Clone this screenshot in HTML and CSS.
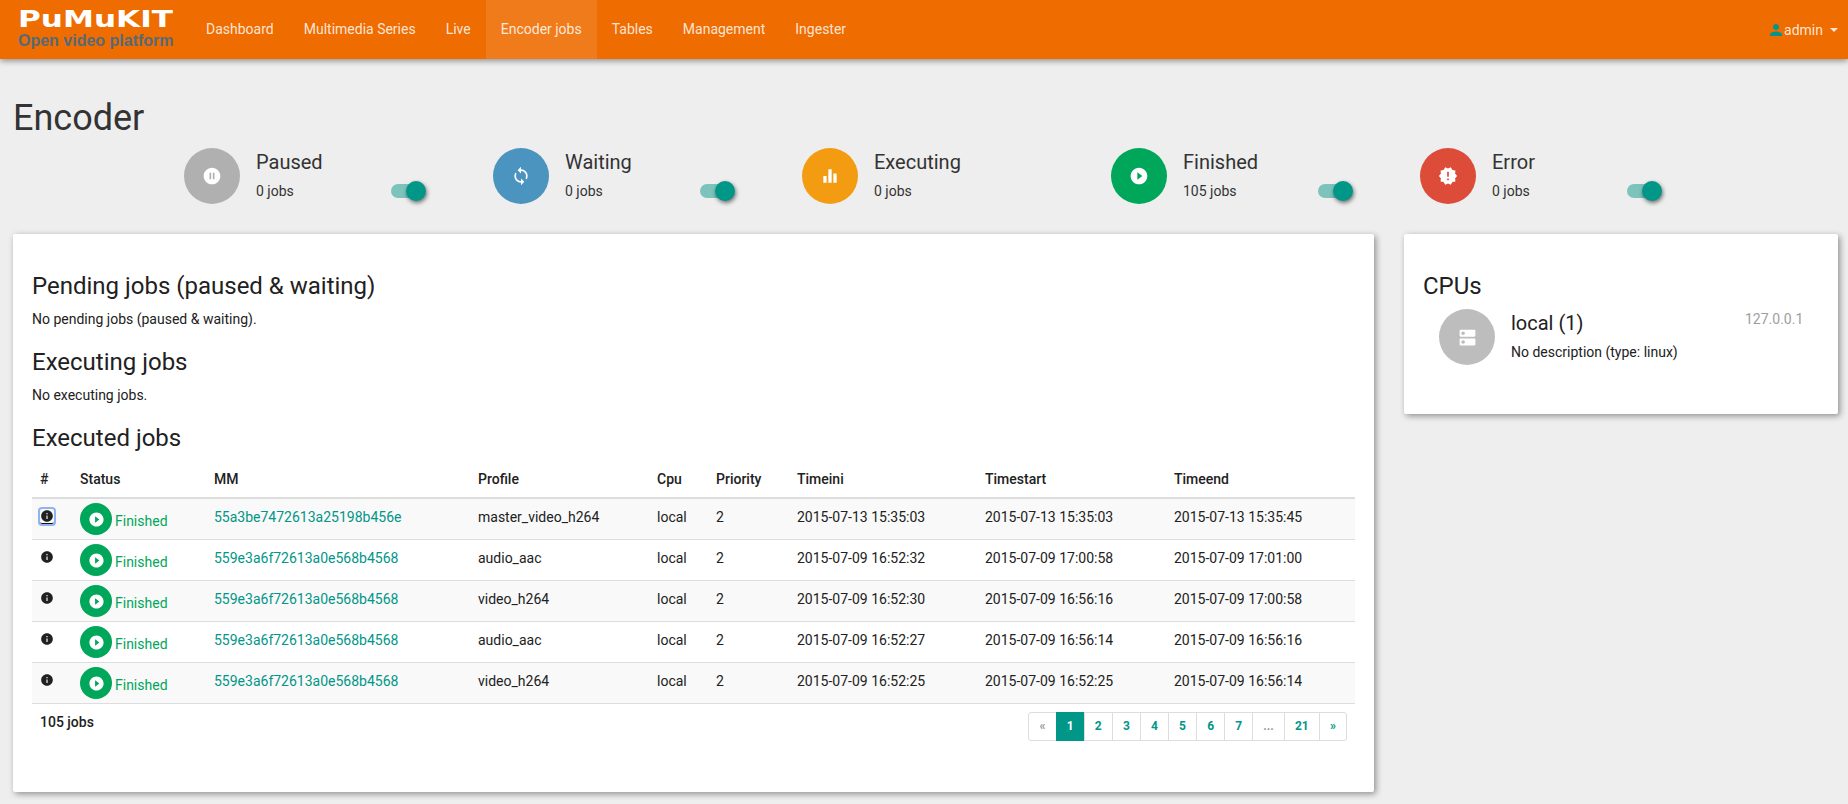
FILE: index.html
```html
<!DOCTYPE html>
<html lang="en">
<head>
    <meta charset="UTF-8">
    <title>PuMuKIT - Encoder jobs</title>
    <link rel="stylesheet" href="styles.css">
</head>
<body>
    <!-- Icon set -->
    <svg class="sprite" xmlns="http://www.w3.org/2000/svg">
        <symbol id="i-pause" viewBox="0 0 24 24"><path d="M12 2C6.48 2 2 6.48 2 12s4.48 10 10 10 10-4.48 10-10S17.52 2 12 2zm-1 14H9V8h2v8zm4 0h-2V8h2v8z"/></symbol>
        <symbol id="i-sync" viewBox="0 0 24 24"><path d="M12 4V1L8 5l4 4V6c3.31 0 6 2.69 6 6 0 1.01-.25 1.97-.7 2.8l1.46 1.46C19.54 15.03 20 13.57 20 12c0-4.42-3.58-8-8-8zm0 14c-3.31 0-6-2.69-6-6 0-1.01.25-1.97.7-2.8L5.24 7.74C4.46 8.97 4 10.43 4 12c0 4.42 3.58 8 8 8v3l4-4-4-4v3z"/></symbol>
        <symbol id="i-bars" viewBox="0 0 24 24"><path d="M10 20h4V4h-4v16zm-6 0h4v-8H4v8zM16 9v11h4V9h-4z"/></symbol>
        <symbol id="i-play" viewBox="0 0 24 24"><path d="M12 2C6.48 2 2 6.48 2 12s4.48 10 10 10 10-4.48 10-10S17.52 2 12 2zm-2 14.5v-9l6 4.5-6 4.5z"/></symbol>
        <symbol id="i-error" viewBox="0 0 24 24"><path d="M23 12l-2.44-2.78.34-3.68-3.61-.82-1.89-3.18L12 3 8.6 1.54 6.71 4.72l-3.61.81.34 3.68L1 12l2.44 2.78-.34 3.69 3.61.82 1.89 3.18L12 21l3.4 1.46 1.89-3.18 3.61-.82-.34-3.68L23 12zm-10 5h-2v-2h2v2zm0-4h-2V7h2v6z"/></symbol>
        <symbol id="i-dns" viewBox="0 0 24 24"><path d="M20 13H4c-.55 0-1 .45-1 1v6c0 .55.45 1 1 1h16c.55 0 1-.45 1-1v-6c0-.55-.45-1-1-1zM7 19c-1.1 0-2-.9-2-2s.9-2 2-2 2 .9 2 2-.9 2-2 2zM20 3H4c-.55 0-1 .45-1 1v6c0 .55.45 1 1 1h16c.55 0 1-.45 1-1V4c0-.55-.45-1-1-1zM7 9c-1.1 0-2-.9-2-2s.9-2 2-2 2 .9 2 2-.9 2-2 2z"/></symbol>
        <symbol id="i-info" viewBox="0 0 24 24"><path d="M12 2C6.48 2 2 6.48 2 12s4.48 10 10 10 10-4.48 10-10S17.52 2 12 2zm1 15h-2v-6h2v6zm0-8h-2V7h2v2z"/></symbol>
        <symbol id="i-person" viewBox="0 0 24 24"><path d="M12 12c2.21 0 4-1.79 4-4s-1.79-4-4-4-4 1.79-4 4 1.79 4 4 4zm0 2c-2.67 0-8 1.34-8 4v2h16v-2c0-2.66-5.33-4-8-4z"/></symbol>
    </svg>

    <header class="navbar">
        <a class="brand" href="#">
            <svg class="brand-logo" viewBox="0 0 156 18" xmlns="http://www.w3.org/2000/svg">
                <text x="0" y="18" textLength="156" lengthAdjust="spacingAndGlyphs">PuMuKIT</text>
            </svg>
            <span class="brand-sub">Open video platform</span>
        </a>
        <ul class="nav-links">
            <li><a href="#">Dashboard</a></li>
            <li><a href="#">Multimedia Series</a></li>
            <li><a href="#">Live</a></li>
            <li class="active"><a href="#">Encoder jobs</a></li>
            <li><a href="#">Tables</a></li>
            <li><a href="#">Management</a></li>
            <li><a href="#">Ingester</a></li>
        </ul>
        <a class="user-menu" href="#">
            <svg class="user-icon"><use href="#i-person"/></svg>
            <span>admin</span>
            <span class="caret"></span>
        </a>
    </header>

    <main class="page">
        <h1>Encoder</h1>

        <section class="stats">
            <div class="stat">
                <div class="circle grey"><svg class="circle-icon"><use href="#i-pause"/></svg></div>
                <div class="stat-text">
                    <h4>Paused</h4>
                    <p>0 jobs</p>
                </div>
                <span class="toggle"></span>
            </div>
            <div class="stat">
                <div class="circle blue"><svg class="circle-icon"><use href="#i-sync"/></svg></div>
                <div class="stat-text">
                    <h4>Waiting</h4>
                    <p>0 jobs</p>
                </div>
                <span class="toggle"></span>
            </div>
            <div class="stat">
                <div class="circle amber"><svg class="circle-icon"><use href="#i-bars"/></svg></div>
                <div class="stat-text">
                    <h4>Executing</h4>
                    <p>0 jobs</p>
                </div>
            </div>
            <div class="stat">
                <div class="circle green"><svg class="circle-icon"><use href="#i-play"/></svg></div>
                <div class="stat-text">
                    <h4>Finished</h4>
                    <p>105 jobs</p>
                </div>
                <span class="toggle"></span>
            </div>
            <div class="stat">
                <div class="circle red"><svg class="circle-icon"><use href="#i-error"/></svg></div>
                <div class="stat-text">
                    <h4>Error</h4>
                    <p>0 jobs</p>
                </div>
                <span class="toggle"></span>
            </div>
        </section>

        <div class="columns">
            <section class="card card-jobs">
                <h3>Pending jobs (paused &amp; waiting)</h3>
                <p>No pending jobs (paused &amp; waiting).</p>

                <h3>Executing jobs</h3>
                <p>No executing jobs.</p>

                <h3>Executed jobs</h3>
                <table class="jobs">
                    <colgroup>
                        <col class="c-num"><col class="c-status"><col class="c-mm"><col class="c-profile"><col class="c-cpu"><col class="c-priority"><col class="c-ini"><col class="c-start"><col>
                    </colgroup>
                    <thead>
                        <tr>
                            <th>#</th>
                            <th>Status</th>
                            <th>MM</th>
                            <th>Profile</th>
                            <th>Cpu</th>
                            <th>Priority</th>
                            <th>Timeini</th>
                            <th>Timestart</th>
                            <th>Timeend</th>
                        </tr>
                    </thead>
                    <tbody>
                        <tr>
                            <td><a class="info focused" href="#"><svg><use href="#i-info"/></svg></a></td>
                            <td class="status"><div class="status-wrap"><span class="mini-circle"><svg><use href="#i-play"/></svg></span><span class="status-text">Finished</span></div></td>
                            <td><a href="#">55a3be7472613a25198b456e</a></td>
                            <td>master_video_h264</td>
                            <td>local</td>
                            <td>2</td>
                            <td>2015-07-13 15:35:03</td>
                            <td>2015-07-13 15:35:03</td>
                            <td>2015-07-13 15:35:45</td>
                        </tr>
                        <tr>
                            <td><a class="info" href="#"><svg><use href="#i-info"/></svg></a></td>
                            <td class="status"><div class="status-wrap"><span class="mini-circle"><svg><use href="#i-play"/></svg></span><span class="status-text">Finished</span></div></td>
                            <td><a href="#">559e3a6f72613a0e568b4568</a></td>
                            <td>audio_aac</td>
                            <td>local</td>
                            <td>2</td>
                            <td>2015-07-09 16:52:32</td>
                            <td>2015-07-09 17:00:58</td>
                            <td>2015-07-09 17:01:00</td>
                        </tr>
                        <tr>
                            <td><a class="info" href="#"><svg><use href="#i-info"/></svg></a></td>
                            <td class="status"><div class="status-wrap"><span class="mini-circle"><svg><use href="#i-play"/></svg></span><span class="status-text">Finished</span></div></td>
                            <td><a href="#">559e3a6f72613a0e568b4568</a></td>
                            <td>video_h264</td>
                            <td>local</td>
                            <td>2</td>
                            <td>2015-07-09 16:52:30</td>
                            <td>2015-07-09 16:56:16</td>
                            <td>2015-07-09 17:00:58</td>
                        </tr>
                        <tr>
                            <td><a class="info" href="#"><svg><use href="#i-info"/></svg></a></td>
                            <td class="status"><div class="status-wrap"><span class="mini-circle"><svg><use href="#i-play"/></svg></span><span class="status-text">Finished</span></div></td>
                            <td><a href="#">559e3a6f72613a0e568b4568</a></td>
                            <td>audio_aac</td>
                            <td>local</td>
                            <td>2</td>
                            <td>2015-07-09 16:52:27</td>
                            <td>2015-07-09 16:56:14</td>
                            <td>2015-07-09 16:56:16</td>
                        </tr>
                        <tr>
                            <td><a class="info" href="#"><svg><use href="#i-info"/></svg></a></td>
                            <td class="status"><div class="status-wrap"><span class="mini-circle"><svg><use href="#i-play"/></svg></span><span class="status-text">Finished</span></div></td>
                            <td><a href="#">559e3a6f72613a0e568b4568</a></td>
                            <td>video_h264</td>
                            <td>local</td>
                            <td>2</td>
                            <td>2015-07-09 16:52:25</td>
                            <td>2015-07-09 16:52:25</td>
                            <td>2015-07-09 16:56:14</td>
                        </tr>
                    </tbody>
                </table>

                <div class="table-footer">
                    <strong>105 jobs</strong>
                    <ul class="pagination">
                        <li class="muted"><a href="#">«</a></li>
                        <li class="current"><a href="#">1</a></li>
                        <li><a href="#">2</a></li>
                        <li><a href="#">3</a></li>
                        <li><a href="#">4</a></li>
                        <li><a href="#">5</a></li>
                        <li><a href="#">6</a></li>
                        <li><a href="#">7</a></li>
                        <li class="muted"><a href="#">...</a></li>
                        <li><a href="#">21</a></li>
                        <li><a href="#">»</a></li>
                    </ul>
                </div>
            </section>

            <aside class="card card-cpus">
                <h3>CPUs</h3>
                <div class="cpu">
                    <div class="circle light"><svg class="cpu-icon"><use href="#i-dns"/></svg></div>
                    <div class="cpu-text">
                        <h4>local (1)</h4>
                        <p>No description (type: linux)</p>
                    </div>
                    <span class="cpu-ip">127.0.0.1</span>
                </div>
            </aside>
        </div>
    </main>
</body>
</html>
```

FILE: styles.css
```css
* {
    box-sizing: border-box;
    margin: 0;
    padding: 0;
}

body {
    font-family: Roboto, Arial, sans-serif;
    font-size: 14px;
    line-height: 20px;
    color: #212121;
    background-color: #eeeeee;
}

a {
    color: #009688;
    text-decoration: none;
}

ul {
    list-style: none;
}

.sprite {
    display: none;
}

/* Navbar */
.navbar {
    display: flex;
    height: 59px;
    background-color: #ef6c00;
    box-shadow: 0 2px 6px rgba(0,0,0,0.4);
}

.brand {
    display: flex;
    flex-direction: column;
    width: 173px;
    padding: 9px 0 0 18px;
}

.brand-logo {
    display: block;
    width: 155px;
    height: 18px;
    overflow: visible;
}

.brand-logo text {
    font-family: "DejaVu Sans", sans-serif;
    font-weight: bold;
    font-size: 24px;
    fill: #ffffff;
}

.brand-sub {
    margin-top: 4px;
    font-family: "Liberation Sans", Arial, sans-serif;
    font-size: 16px;
    font-weight: bold;
    line-height: 20px;
    white-space: nowrap;
    color: #566a78;
}

.nav-links {
    display: flex;
    margin-left: 18px;
}

.nav-links a {
    display: block;
    padding: 19px 15px 20px;
    color: rgba(255,255,255,0.84);
}

.nav-links .active {
    background-color: rgba(255,255,255,0.1);
}

.user-menu {
    display: flex;
    align-items: center;
    margin-left: auto;
    padding-right: 10px;
    color: rgba(255,255,255,0.84);
}

.user-icon {
    width: 18px;
    height: 18px;
    margin-right: -1px;
    fill: #009688;
}

.caret {
    width: 0;
    height: 0;
    margin-left: 7px;
    border-top: 4px solid rgba(255,255,255,0.84);
    border-left: 4px solid transparent;
    border-right: 4px solid transparent;
}

/* Page */
.page {
    padding: 39px 0 12px 13px;
}

h1 {
    font-size: 36px;
    font-weight: 400;
    line-height: 40px;
    color: #333333;
}

h3 {
    font-size: 24px;
    font-weight: 400;
    line-height: 27px;
}

h4 {
    font-size: 20px;
    font-weight: 400;
    line-height: 24px;
}

/* Status row */
.stats {
    display: flex;
    margin: 10px 0 30px 171px;
}

.stat {
    display: flex;
    width: 309px;
}

.circle {
    display: flex;
    align-items: center;
    justify-content: center;
    flex: none;
    width: 56px;
    height: 56px;
    border-radius: 50%;
}

.grey { background-color: #b0b0b0; }
.blue { background-color: #4b94c0; }
.amber { background-color: #f39c12; }
.green { background-color: #00a65a; }
.red { background-color: #dd4b39; }
.light { background-color: #bdbdbd; }

.circle-icon {
    width: 20px;
    height: 20px;
    fill: #ffffff;
}

.stat-text {
    width: 135px;
    margin-left: 16px;
    padding-top: 2px;
    color: #333333;
}

.stat-text p {
    margin-top: 7px;
}

.toggle {
    position: relative;
    width: 35px;
    height: 20px;
    margin-top: 33px;
}

.toggle::before {
    content: "";
    position: absolute;
    left: 0;
    top: 3px;
    width: 32px;
    height: 14px;
    border-radius: 7px;
    background-color: #7cc3bb;
}

.toggle::after {
    content: "";
    position: absolute;
    right: 0;
    top: 0;
    width: 20px;
    height: 20px;
    border-radius: 50%;
    background-color: #009688;
    box-shadow: 1px 2px 4px rgba(0,0,0,0.55);
}

/* Cards */
.columns {
    display: flex;
    align-items: flex-start;
    gap: 30px;
}

.card {
    padding: 39px 19px 0;
    background-color: #ffffff;
    border-radius: 2px;
    box-shadow: 2px 2px 6px rgba(0,0,0,0.4);
}

.card-jobs {
    width: 1361px;
    height: 558px;
}

.card-jobs p {
    margin: 9px 0 20px;
}

.card-cpus {
    width: 434px;
    height: 180px;
}

/* Jobs table */
.jobs {
    width: 1323px;
    margin-top: 9px;
    table-layout: fixed;
    border-collapse: collapse;
}

.c-num { width: 40px; }
.c-status { width: 134px; }
.c-mm { width: 264px; }
.c-profile { width: 179px; }
.c-cpu { width: 59px; }
.c-priority { width: 81px; }
.c-ini { width: 188px; }
.c-start { width: 189px; }

.jobs th {
    padding: 8px;
    font-weight: 500;
    text-align: left;
    border-bottom: 2px solid #dddddd;
}

.jobs td {
    padding: 8px;
    vertical-align: top;
    border-bottom: 1px solid #dddddd;
}

.jobs tbody tr:nth-child(odd) {
    background-color: #f9f9f9;
}

.jobs td.status {
    padding: 4px 8px;
}

.info {
    display: block;
    width: 14px;
    height: 14px;
    margin-top: 2px;
}

.info svg {
    display: block;
    width: 14px;
    height: 14px;
    fill: #212121;
}

.info.focused {
    height: 15px;
    border-bottom: 1px solid #111111;
    outline: 2px solid #8db4f3;
    border-radius: 2px;
}

.status-wrap {
    display: flex;
}

.mini-circle {
    display: flex;
    align-items: center;
    justify-content: center;
    width: 32px;
    height: 32px;
    border-radius: 50%;
    background-color: #00a65a;
}

.mini-circle svg {
    width: 17px;
    height: 17px;
    fill: #ffffff;
}

.status-text {
    margin: 8px 0 0 3px;
    color: #00a65a;
}

/* Footer of the table */
.table-footer {
    display: flex;
    justify-content: space-between;
    margin-top: 8px;
    padding: 0 8px;
}

.table-footer strong {
    font-weight: 500;
}

.pagination {
    display: flex;
    height: 29px;
    font-size: 12px;
    font-weight: 700;
    line-height: 17px;
}

.pagination a {
    display: block;
    height: 29px;
    margin-left: -1px;
    padding: 5px 10.1px;
    background-color: #ffffff;
    border: 1px solid #dddddd;
}

.pagination li:first-child a {
    margin-left: 0;
    border-radius: 3px 0 0 3px;
}

.pagination li:last-child a {
    border-radius: 0 3px 3px 0;
}

.pagination .muted a {
    color: #999999;
}

.pagination .current a {
    color: #ffffff;
    background-color: #009688;
    border-color: #009688;
}

/* CPU card */
.cpu {
    display: flex;
    margin: 9px 0 0 16px;
}

.cpu-icon {
    width: 21px;
    height: 21px;
    fill: #ffffff;
}

.cpu-text {
    width: 234px;
    margin-left: 16px;
    padding-top: 2px;
}

.cpu-text p {
    margin-top: 7px;
}

.cpu-ip {
    color: #9e9e9e;
}
```
